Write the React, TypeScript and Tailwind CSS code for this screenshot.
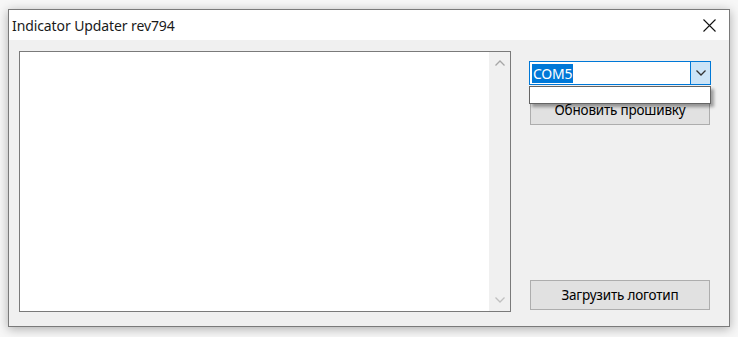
import React from "react";

const font = { fontFamily: '"Noto Sans", "Segoe UI", sans-serif' };

function Chevron({ up, color }: { up?: boolean; color: string }) {
  return (
    <svg width="10" height="6" viewBox="0 0 10 6">
      <path
        d={up ? "M0.5 5.5 L5 1 L9.5 5.5" : "M0.5 0.5 L5 5 L9.5 0.5"}
        fill="none"
        stroke={color}
        strokeWidth="1.3"
      />
    </svg>
  );
}

export default function App() {
  return (
    <div className="w-[738px] h-[337px] bg-[#f7f7f7] pt-[9px] pl-[8px]" style={font}>
      <div className="w-[722px] h-[318px] border border-[#7a7a7a] bg-[#f0f0f0] flex flex-col shadow-[0_2px_10px_rgba(0,0,0,0.3)]">
        <div className="h-[30px] bg-white flex items-center justify-between pl-[3px] pr-[13px]">
          <span className="text-[14px] tracking-[-0.1px] text-[#1a1a1a] leading-none mt-[2px]">Indicator Updater rev794</span>
          <svg width="13" height="13" viewBox="0 0 13 13">
            <path d="M0.5 0.5 L12.5 12.5 M12.5 0.5 L0.5 12.5" stroke="#111" strokeWidth="1.1" />
          </svg>
        </div>
        <div className="flex pl-[10px] pt-[11px]">
          <div className="w-[492px] h-[261px] border border-[#7a7a7a] bg-white flex justify-end">
            <div className="w-[21px] h-full bg-[#f0f0f0] flex flex-col items-center justify-between pt-[8px] pb-[8px]">
              <Chevron up color="#a6a6a6" />
              <Chevron color="#c0c0c0" />
            </div>
          </div>
          <div className="ml-[18px] w-[182px] h-[261px] flex flex-col pt-[10px]">
            <div className="relative">
              <div className="h-[24px] border border-[#0078d7] bg-white flex">
                <div className="flex-1 flex items-center pl-[2px]">
                  <span className="bg-[#0078d7] text-white text-[14px] tracking-[-0.2px] leading-[19px] px-[1px]">COM5</span>
                </div>
                <div className="w-[20px] bg-[#cce4f7] border-l border-[#0078d7] flex items-center justify-center">
                  <Chevron color="#333" />
                </div>
              </div>
              <div className="absolute left-0 top-[25px] w-[182px] h-[18px] bg-white border border-[#646464] shadow-[3px_3px_3px_rgba(0,0,0,0.35)] z-10" />
            </div>
            <button className="mt-[10px] mx-[1px] h-[30px] bg-[#e1e1e1] border border-[#adadad] text-[13.5px] tracking-[-0.2px] text-black flex items-center justify-center">
              Обновить прошивку
            </button>
            <button className="mt-auto mb-[2px] mx-[1px] h-[30px] bg-[#e1e1e1] border border-[#adadad] text-[13.5px] tracking-[-0.2px] text-black flex items-center justify-center">
              Загрузить логотип
            </button>
          </div>
        </div>
      </div>
    </div>
  );
}
